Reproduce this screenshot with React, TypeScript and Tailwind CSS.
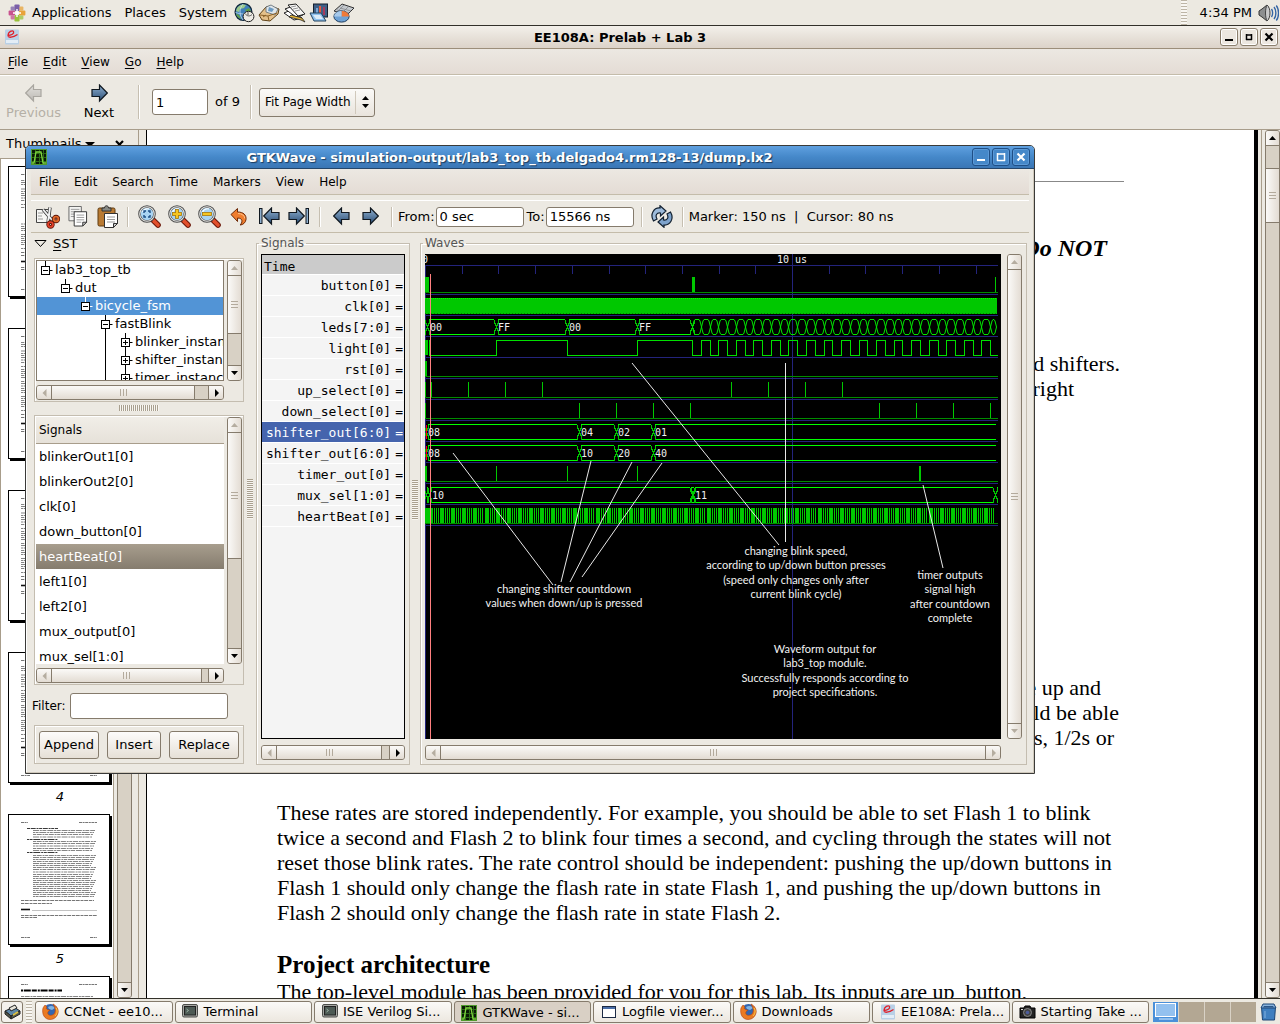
import React from "react";

const UI = "font-['DejaVu_Sans',sans-serif] text-[12px] leading-[16px] text-black";

/* ---------- small drawings ---------- */

function DistroLogo() {
  const petals = ["#7b5fa8", "#e8a33a", "#9ac23c", "#c8528f"];
  return (
    <svg width="18" height="18" viewBox="0 0 18 18" aria-hidden="true">
      {petals.map((c, i) => (
        <g key={c} transform={`rotate(${i * 90} 9 9)`}>
          <rect x="6.4" y="0.6" width="5.2" height="6.4" rx="1" fill={c} />
          <rect x="11.4" y="2.6" width="4" height="4" rx="1" fill={petals[(i + 1) % 4]} opacity="0.75" />
        </g>
      ))}
      <path d="M9 5v8M5 9h8" stroke="#fff" strokeWidth="1.4" />
    </svg>
  );
}

function GlobeIcon() {
  return (
    <svg width="21" height="20" viewBox="0 0 21 20" aria-hidden="true">
      <circle cx="9.5" cy="9" r="8.4" fill="#3f7fb8" stroke="#10263a" strokeWidth="1.3" />
      <path d="M3 5c3-4 7-4 9-3l-2 3-4 1-1 3-3-1z" fill="#9cc98a" />
      <path d="M2 11c3 0 4 2 5 5-2-1-4-2-5-5zM11 7l4-2 2 3-2 3z" fill="#5f9e48" />
      <path d="M1.5 9.5c5 2 11 2 16 0M9 1c-4 5-4 11 0 16" stroke="#cfe3f3" strokeWidth="0.7" fill="none" />
      <ellipse cx="14.5" cy="13.5" rx="5.4" ry="5.2" fill="#eceae4" stroke="#222" />
      <path d="M11 10.5c2 3 5 3 7 1M14 9v3" stroke="#555" fill="none" />
    </svg>
  );
}

function MailIcon() {
  return (
    <svg width="22" height="20" viewBox="0 0 22 20" aria-hidden="true">
      <path d="M1 12 8 4l4-1 9 3-1 5-8 7-8-1z" fill="#e4c08a" stroke="#5f4218" />
      <path d="m8 4 5-2 7 4-3 6-9-3z" fill="#dfe6ea" stroke="#5d6a73" strokeWidth="0.8" />
      <path d="m11 4 5 2-2 3-4-1z" fill="#6c9ac2" />
      <path d="m2 12 8 1 9-3M10 13l1 5M5 14l3-2" stroke="#8a6027" fill="none" />
    </svg>
  );
}

function WriterIcon() {
  return (
    <svg width="23" height="20" viewBox="0 0 23 20" aria-hidden="true">
      <path d="m1 10 7-3 11 8-8 2z" fill="#fff" stroke="#222" />
      <path d="m2 6 8-3 10 9-7 2z" fill="#fff" stroke="#222" />
      <path d="m5 2 8-1 9 10-7 2z" fill="#f8f8f6" stroke="#222" />
      <path d="m8 4 5-1M10 6l5-1M12 8l5-1" stroke="#999" />
      <path d="m6 14 12 3 4 2-3-4-11-3z" fill="#e9b83a" stroke="#222" strokeWidth="0.8" />
    </svg>
  );
}

function ImpressIcon() {
  return (
    <svg width="20" height="20" viewBox="0 0 20 20" aria-hidden="true">
      <rect x="4.5" y="1" width="14" height="13" fill="#3f5f85" stroke="#141f2d" />
      <path d="M8 11V5" stroke="#7aa7d8" strokeWidth="2" />
      <path d="M11 11V3" stroke="#e35b3c" strokeWidth="2" />
      <path d="M15 12V4" stroke="#a53a5c" strokeWidth="2" />
      <path d="m1 10 11 0 5 8H5z" fill="#8fc1ee" stroke="#23425f" />
      <path d="m4 12 7 0 3 4H7z" fill="#dcebf8" />
    </svg>
  );
}

function CalcIcon() {
  return (
    <svg width="23" height="20" viewBox="0 0 23 20" aria-hidden="true">
      <path d="m2 8 8-7 12 4-7 7z" fill="#c3c8cd" stroke="#333" />
      <path d="m5 7 12 3M8 5l11 3M12 2 6 8M16 4l-5 5" stroke="#7c8085" strokeWidth="0.7" />
      <ellipse cx="9.5" cy="13.5" rx="7.6" ry="5.600" fill="#6ea2d6" stroke="#1f3c5c" />
      <path d="M9.500 13.500V8c5 0 7.500 2.500 7.500 5.500z" fill="#ef7a3a" />
      <path d="M9.500 13.500H2c1-4 4-5.500 7.500-5.500z" fill="#a7c9ea" />
    </svg>
  );
}

function VolumeIcon() {
  return (
    <svg width="21" height="18" viewBox="0 0 21 18" aria-hidden="true">
      <path d="M1 7 4 5l5-4c3 3 3 13 0 16l-5-4-3-2z" fill="#8d8f90" stroke="#333" />
      <path d="M9 1c4 3 4 13 0 16-2-4-2-12 0-16z" fill="#c9cacb" stroke="#444" />
      <path d="M13.500 5c1.500 2 1.500 6 0 8M16 3c2.500 3 2.500 9 0 12M18.300 1.500c3 4 3 11 0 15" stroke="#3465a4" strokeWidth="1.400" fill="none" />
    </svg>
  );
}

function PdfIcon({ size = 16 }: { size?: number }) {
  return (
    <svg width={size} height={size} viewBox="0 0 16 16" aria-hidden="true">
      <rect x="1" y="0.500" width="14" height="15" rx="1" fill="#b9d0e6" />
      <path d="M2 11h12v3H2z" fill="#e3edf6" />
      <path d="M3.500 6.500c4 0 7-2 6-4C8.500.5 4 3 4 6.200c0 3.300 5 2.300 9.500-.7" fill="none" stroke="#e0202a" strokeWidth="1.300" />
    </svg>
  );
}

function WaveAppIcon() {
  return (
    <svg width="16" height="16" viewBox="0 0 16 16" aria-hidden="true">
      <rect width="16" height="16" fill="#0a1a06" />
      <path d="M0 4.500h16M0 8.500h16M0 12.500h16M4.500 0v16M8.500 0v16M12.500 0v16" stroke="#2c6b16" />
      <rect x="0.500" y="0.500" width="15" height="15" fill="none" stroke="#4f9a2c" />
      <path d="M1 14h2l2-11h5l2 11h3" fill="none" stroke="#7fd63f" strokeWidth="1.300" />
    </svg>
  );
}

function ArrowIcon({ dir, bar = false, off = false }: { dir: "left" | "right"; bar?: boolean; off?: boolean }) {
  const id = `arrow-${dir}-${bar}-${off}`;
  return (
    <svg width={bar ? 21 : 17} height="19" viewBox={bar ? "0 0 21 19" : "0 0 17 19"} aria-hidden="true">
      <defs>
        <linearGradient id={id} x1="0" y1="0" x2="0" y2="1">
          <stop offset="0" stopColor={off ? "#e2e0dc" : "#8fb0d0"} />
          <stop offset="1" stopColor={off ? "#bdbab5" : "#2c4f77"} />
        </linearGradient>
      </defs>
      <g transform={dir === "right" ? `translate(${bar ? 21 : 17} 0) scale(-1 1)` : undefined}>
        {bar && <rect x="0.500" y="1.500" width="2.500" height="15" fill="#8fb0d0" stroke="#101820" />}
        <g transform={bar ? "translate(4 0)" : undefined}>
          <path d="M0.700 9 8.500 1V5.500H16V12.500H8.500V17z" fill={`url(#${id})`} stroke={off ? "#a9a6a0" : "#101820"} strokeWidth="1.200" />
        </g>
      </g>
    </svg>
  );
}

function CutIcon() {
  return (
    <svg width="25" height="24" viewBox="0 0 25 24" aria-hidden="true">
      <path d="M1.500 4.500h14l-2 13h-12z" fill="#f7f7f5" stroke="#444" />
      <path d="M3 8h5M3 11h4M3 14h5" stroke="#999" />
      <path d="M8 4.500 17 15M15 2.500 13 18" stroke="#333" strokeWidth="3.400" />
      <path d="M8 4.500 17 15M15 2.500 13 17" stroke="#f1f2f3" strokeWidth="1.900" />
      <ellipse cx="21" cy="14" rx="2.400" ry="2.400" fill="none" stroke="#5a1408" strokeWidth="3.600" />
      <ellipse cx="21" cy="14" rx="2.400" ry="2.400" fill="none" stroke="#e06a2a" strokeWidth="1.900" />
      <ellipse cx="15.500" cy="19.500" rx="2.400" ry="2.400" fill="none" stroke="#5a1408" strokeWidth="3.600" />
      <ellipse cx="15.500" cy="19.500" rx="2.400" ry="2.400" fill="none" stroke="#e0402a" strokeWidth="1.900" />
    </svg>
  );
}

function CopyIcon() {
  return (
    <svg width="21" height="23" viewBox="0 0 21 23" aria-hidden="true">
      <path d="M1 1h13v15H1z" fill="#f4f4f2" stroke="#666" />
      <path d="M3 4h9M3 6.500h5M3 9h4M3 11.500h4" stroke="#999" />
      <path d="M6.500 6.500h13v11l-4 4h-9z" fill="#fff" stroke="#333" />
      <path d="M9 10h8M9 12.500h8M9 15h8M9 17.500h5" stroke="#999" />
      <path d="M19.500 17.500h-4v4z" fill="#ccc" stroke="#333" />
    </svg>
  );
}

function PasteIcon() {
  return (
    <svg width="22" height="23" viewBox="0 0 22 23" aria-hidden="true">
      <rect x="1" y="3" width="17" height="18" rx="1.500" fill="#b87a33" stroke="#5e3a10" />
      <path d="M5 6V3h2.500c0-3 4-3 4 0H14v3z" fill="#888a85" stroke="#333" />
      <path d="M7.500 8.500h13v10l-4 4h-9z" fill="#fff" stroke="#333" />
      <path d="M10 12h8M10 14.500h8M10 17h8" stroke="#999" />
      <path d="M20.500 18.500h-4v4z" fill="#ccc" stroke="#333" />
    </svg>
  );
}

function ZoomIcon({ kind }: { kind: "fit" | "in" | "out" }) {
  return (
    <svg width="23" height="23" viewBox="0 0 23 23" aria-hidden="true">
      <path d="m15 15 5 5" stroke="#6b1708" strokeWidth="5.600" strokeLinecap="round" />
      <path d="m16 16 4 4" stroke="#e2502c" strokeWidth="3.600" strokeLinecap="round" />
      <circle cx="9" cy="9" r="7.500" fill="#a9d4f2" stroke="#4c4c4c" strokeWidth="2.600" />
      <circle cx="9" cy="9" r="7.300" fill="none" stroke="#e6e6e3" strokeWidth="1.100" />
      <path d="M4.500 7C6 4 9 3.500 11 4" stroke="#fff" strokeWidth="1.200" fill="none" />
      {kind === "fit" && <path d="M6 8V6h2M10 6h2v2M12 10v2h-2M8 12H6v-2" stroke="#1c4f86" strokeWidth="1.400" fill="none" />}
      {kind !== "fit" && <rect x="4.500" y="7.500" width="9" height="3" fill="#f6c622" stroke="#a8780a" strokeWidth="0.800" />}
      {kind === "in" && (
        <>
          <rect x="7.500" y="4.500" width="3" height="9" fill="#f6c622" stroke="#a8780a" strokeWidth="0.800" />
          <rect x="5" y="8" width="8" height="2" fill="#f6c622" />
        </>
      )}
    </svg>
  );
}

function UndoIcon() {
  return (
    <svg width="18" height="19" viewBox="0 0 18 19" aria-hidden="true">
      <path d="M1 7.500 7.500 1.500V5c6 0 9 3 8.500 7.500-.3 3-3 5.500-6 5.500 2.500-2 3.500-7-2.500-7v3.500z" fill="#ef7d2e" stroke="#6e2a08" />
      <path d="M8 6.500c4 0 6.500 2 6.800 5" stroke="#ffc48c" fill="none" />
    </svg>
  );
}

function RefreshIcon() {
  const half = "M3.500 16C-.5 9 4 2.500 10 3V.7L16 6l-5.500 5V8C6.500 7.500 5 10.500 7 14z";
  return (
    <svg width="24" height="23" viewBox="0 0 24 23" aria-hidden="true">
      <path d={half} fill="#9dbbdb" stroke="#122030" strokeWidth="1.200" />
      <path d={half} fill="#7ea3cc" stroke="#122030" strokeWidth="1.200" transform="rotate(180 12 11.5)" />
    </svg>
  );
}

function FirefoxIcon() {
  return (
    <svg width="17" height="17" viewBox="0 0 17 17" aria-hidden="true">
      <circle cx="8.500" cy="8.500" r="7.500" fill="#3466b0" />
      <path d="M6 4c3-2 6-1 7 1l-3 2-3-1z" fill="#7fb4e4" />
      <path d="M1 5C2 3 3 2 3 2l2 2c-2 2 1 3 3 3-1 1-3 2-2 4s6 2 7-2c1-3-1-6-2-8 4 2 6 6 5 9-1 4-4 6.500-8 6.500C2.500 16.500-.5 11 1 5z" fill="#ea7a22" stroke="#b3420e" strokeWidth="0.600" />
      <path d="M14 5c2 3 1 6-1 8" stroke="#f9cf4a" fill="none" />
    </svg>
  );
}

function TerminalIcon() {
  return (
    <svg width="16" height="15" viewBox="0 0 16 15" aria-hidden="true">
      <rect x="0.500" y="0.500" width="15" height="12.500" rx="1.500" fill="#a7a8a4" stroke="#4c4d49" />
      <rect x="2.500" y="2.500" width="11" height="8.500" fill="#4d5a54" stroke="#222" />
      <path d="M4.500 5l2 1.500-2 1.500" stroke="#9db3a6" fill="none" />
    </svg>
  );
}

function WindowIcon() {
  return (
    <svg width="14" height="12" viewBox="0 0 14 12" aria-hidden="true">
      <rect x="0.500" y="0.500" width="13" height="11" fill="#fff" stroke="#1c2a44" />
      <path d="M1 2h12" stroke="#4a6ea8" strokeWidth="2" />
    </svg>
  );
}

function CameraIcon() {
  return (
    <svg width="17" height="14" viewBox="0 0 17 14" aria-hidden="true">
      <path d="M1 3h4l1-2h5l1 2h4v10H1z" fill="#222" stroke="#000" />
      <circle cx="8.500" cy="7.500" r="4" fill="#444" stroke="#888" />
      <circle cx="8.500" cy="7.500" r="1.800" fill="#4c5c9c" />
      <path d="M2 4.500h2" stroke="#ddd" />
    </svg>
  );
}

function DesktopIcon() {
  return (
    <svg width="17" height="16" viewBox="0 0 17 16" aria-hidden="true">
      <path d="m1 7 9-4 6 4-9 5z" fill="#5b86a8" stroke="#222" />
      <path d="m1 7 6 5v3L1 10zM7 12l9-5v3l-9 5z" fill="#55584a" stroke="#222" />
      <path d="m5 4 6-3 2 3-6 3z" fill="#e7e4da" stroke="#222" />
      <path d="m9 11 5-3" stroke="#e0c341" strokeWidth="1.600" />
    </svg>
  );
}

function TrashIcon() {
  return (
    <svg width="17" height="18" viewBox="0 0 17 18" aria-hidden="true">
      <path d="M1.500 4h14l-1 13h-12z" fill="#3f7fc0" stroke="#1d4676" />
      <path d="M3 1h11l2 4H1z" fill="#8ab4dd" stroke="#1d4676" />
      <path d="M4 3h9l1 1.500H3z" fill="#2a5688" />
      <path d="M5 8v7" stroke="#86b3e0" />
    </svg>
  );
}

function Triangle({ dir, off = false }: { dir: "up" | "down" | "left" | "right"; off?: boolean }) {
  const d = { up: "M0 6 3.500 2 7 6z", down: "M0 2 3.500 6 7 2z", left: "M5.500 0 1.500 4 5.500 8z", right: "M2 0 6 4 2 8z" }[dir];
  return (
    <svg width="7" height="8" viewBox="0 0 7 8" aria-hidden="true">
      <path d={d} fill={off ? "#b5ada0" : "#000"} />
    </svg>
  );
}

/* ---------- shared widgets ---------- */

function WindowButtons({ active = false }: { active?: boolean }) {
  const tone = active
    ? "border-[#1f4f86] bg-[#4588c9] text-white shadow-[inset_0_0_0_1px_#5c9ad8]"
    : "border-[#8a7e6c] bg-[#ece7e0] text-black shadow-[inset_0_0_0_1px_#fff]";
  return (
    <div className="flex gap-[2px]">
      {["Minimize", "Maximize", "Close"].map((name) => (
        <button key={name} aria-label={name} className={`flex size-[18px] items-center justify-center rounded-[3px] border ${tone}`}>
          <svg width="10" height="10" viewBox="0 0 10 10" fill="none" stroke="currentColor" strokeWidth="2" aria-hidden="true">
            {name === "Minimize" && <path d="M1 8h8" />}
            {name === "Maximize" && (active ? <path d="M1 2h8M1.500 1v8M8.500 1v8M1 8.500h8" strokeWidth="1.500" /> : <path d="M2 3h6M2.500 2v6M7.500 2v6M2 7.500h6" strokeWidth="1.500" />)}
            {name === "Close" && <path d="m1.500 1.500 7 7M8.500 1.500l-7 7" strokeWidth="2.200" />}
          </svg>
        </button>
      ))}
    </div>
  );
}

interface ScrollProps {
  vertical?: boolean;
  before?: string;
  after?: string;
  startOff?: boolean;
  endOff?: boolean;
  className?: string;
}

function Scroll({ vertical = false, before = "", after = "", startOff = false, endOff = false, className = "" }: ScrollProps) {
  const grad = vertical ? "bg-linear-to-r from-[#fbfaf8] to-[#e3dcd3]" : "bg-linear-to-b from-[#fbfaf8] to-[#e3dcd3]";
  const btn = vertical ? "h-[14px] w-full" : "h-full w-[14px]";
  const edge = vertical ? "border-y" : "border-x";
  return (
    <div className={`flex shrink-0 overflow-hidden rounded-[3px] border border-[#857b6c] bg-[#d8d1c5] ${vertical ? "w-[15px] flex-col" : "h-[15px]"} ${className}`}>
      <button aria-label="Scroll back" className={`flex shrink-0 items-center justify-center ${btn} ${grad}`}>
        <Triangle dir={vertical ? "up" : "left"} off={startOff} />
      </button>
      {before && <div className={`shrink-0 border-[#857b6c] ${vertical ? "border-t" : "border-l"} ${before}`} />}
      <div className={`flex flex-1 items-center justify-center gap-[2px] border-[#857b6c] ${vertical ? "flex-col" : ""} ${edge} ${grad}`}>
        {[0, 1, 2].map((i) => (
          <i key={i} className={`bg-[#b3aa9c] ${vertical ? "h-px w-[7px]" : "h-[7px] w-px"}`} />
        ))}
      </div>
      {after && <div className={`shrink-0 border-[#857b6c] ${vertical ? "border-b" : "border-r"} ${after}`} />}
      <button aria-label="Scroll forward" className={`flex shrink-0 items-center justify-center ${btn} ${grad}`}>
        <Triangle dir={vertical ? "down" : "right"} off={endOff} />
      </button>
    </div>
  );
}

function Separator({ className = "" }: { className?: string }) {
  return <div className={`w-[2px] shrink-0 border-l border-[#c6bfb1] bg-white ${className}`} />;
}

function GripV() {
  return <div className="h-[40px] w-[6px] self-center bg-[repeating-linear-gradient(#a9a08f_0_1px,#f8f6f2_1px_2px)]" />;
}

/* ---------- desktop panel ---------- */

function TopPanel() {
  return (
    <header className="flex h-[26px] shrink-0 items-center border-b border-[#33312a] bg-[#ece9e1] pr-[1px] pl-2 text-[13px]">
      <DistroLogo />
      <nav className="ml-[6px] flex gap-[13px]">
        <button>Applications</button>
        <button>Places</button>
        <button>System</button>
      </nav>
      <div className="ml-[7px] flex items-center gap-[3px]">
        <GlobeIcon />
        <MailIcon />
        <WriterIcon />
        <ImpressIcon />
        <CalcIcon />
      </div>
      <div className="ml-auto h-full w-[6px] bg-[repeating-linear-gradient(#bdb5a6_0_1px,#f8f6f2_1px_3px)]" />
      <span className="ml-[13px]">4:34 PM</span>
      <span className="ml-[6px]">
        <VolumeIcon />
      </span>
    </header>
  );
}

const tasks: [React.ReactNode, string][] = [
  [<FirefoxIcon />, "CCNet - ee10..."],
  [<TerminalIcon />, "Terminal"],
  [<TerminalIcon />, "ISE Verilog Si..."],
  [<WaveAppIcon />, "GTKWave - si..."],
  [<WindowIcon />, "Logfile viewer..."],
  [<FirefoxIcon />, "Downloads"],
  [<PdfIcon />, "EE108A: Prela..."],
  [<CameraIcon />, "Starting Take ..."],
];

function TaskBar() {
  return (
    <footer className="flex h-[26px] shrink-0 items-center border-t border-[#33312a] bg-[#ece9e1] px-[1px]">
      <button aria-label="Show desktop" className="flex h-[22px] w-[22px] items-center justify-center rounded-[3px] border border-[#857b6c] bg-[#f4f1ec]">
        <DesktopIcon />
      </button>
      <div className="mx-[3px] h-[22px] w-[6px] bg-[repeating-linear-gradient(#bdb5a6_0_1px,#f8f6f2_1px_3px)]" />
      <div className="flex min-w-0 flex-1 gap-[2px]">
        {tasks.map(([icon, label]) => (
          <button
            key={label}
            className={`flex h-[22px] min-w-0 flex-1 items-center gap-[5px] rounded-[3px] border border-[#857b6c] px-[6px] text-[13px] whitespace-nowrap ${
              label.startsWith("GTKWave") ? "bg-[#d9d0c5] pt-[2px]" : "bg-linear-to-b from-[#fbfaf8] to-[#ece7df]"
            }`}
          >
            <span className="flex w-[17px] shrink-0 justify-center">{icon}</span>
            <span>{label}</span>
          </button>
        ))}
      </div>
      <div className="ml-[4px] flex h-[20px] gap-px bg-[#d9d2c6]">
        <div className="flex w-[25px] flex-col items-center bg-[#4a90d9] pt-[1px]">
          <div className="h-[14px] w-[21px] border border-white bg-[#93c1ef]" />
          <div className="mt-[1px] h-[2px] w-[14px] bg-[#93c1ef]" />
        </div>
        <div className="w-[25px] bg-[#b3a793]" />
        <div className="w-[25px] bg-[#b3a793]" />
        <div className="w-[25px] bg-[#b3a793]" />
      </div>
      <div className="mr-[2px] ml-[4px]">
        <TrashIcon />
      </div>
    </footer>
  );
}

/* ---------- document viewer ---------- */

const bodyLines = [14, 16, 18, 20, 22.5, 25, 27, 29, 31.5, 34, 36, 38, 41, 43, 45, 47, 49, 51, 53, 55, 57.5, 60, 62, 64, 66, 68, 70, 72, 74, 76, 78, 80, 82];

function Thumbnail({ page }: { page: number }) {
  const dense = page !== 1;
  return (
    <button className="flex h-[162px] w-[104px] shrink-0 flex-col items-center">
      <svg width="104" height="133" viewBox="0 0 104 133" aria-hidden="true">
        <path d="M2 2h102v131H2z" fill="#000" />
        <rect x="0.500" y="0.500" width="101" height="130" fill="#fff" stroke="#000" />
        <g stroke="#666" strokeWidth="0.900" fill="none">
          <path d="M13 8.500h7M71 8.500h18M13 123.500h9M82 123.500h7" strokeDasharray="3 .6 2 .6" />
          {page === 6 && <path d="M13 14.500h41" stroke="#000" strokeWidth="2" strokeDasharray="2 .8 7 1 5 1" />}
          {bodyLines.map((y, i) => {
            const head = page === 5 && (y === 14 || y === 25 || y === 38);
            const x = page === 5 ? (head ? 19 : 25) : page === 6 ? 13 : 13 + (i % 7 === 3 ? 4 : 0);
            if (page === 6 && y < 20) return null;
            if (!dense && i > 12 && i < 20) return null;
            return (
              <path
                key={y}
                d={`M${x} ${y + 0.5}H${head ? 50 : 88 - ((i * 7) % 6)}`}
                stroke={head ? "#222" : "#777"}
                strokeDasharray={["3 .7 5 .8 2 .6", "6 .8 2 .6 4 .9", "2 .6 3 .7 7 .9"][i % 3]}
              />
            );
          })}
          <path d="M13 86.500h73M13 89.500h31M13 101.500h76M13 103.500h16" strokeDasharray="3 .7 4 .8" />
          <path d="M13 95.500h9" stroke="#111" strokeWidth="1.600" />
          <path d="M24 96.500h65" stroke="#bbb" />
        </g>
      </svg>
      <span className="mt-[4px] text-[13px] italic">{page}</span>
    </button>
  );
}

function ViewerChrome() {
  return (
    <>
      <div className="flex h-[23px] shrink-0 items-center border-b border-[#9c8e7a] bg-linear-to-b from-[#f3f0ea] to-[#dcd3c9] pr-[2px] pl-[4px]">
        <PdfIcon />
        <h1 className="flex-1 pt-[2px] text-center text-[13px] font-bold">EE108A: Prelab + Lab 3</h1>
        <WindowButtons />
      </div>
      <nav className="flex h-[26px] shrink-0 items-center gap-[15px] border-b border-[#c4bcaa] bg-linear-to-b from-[#ece8e2] to-[#e4dcd5] px-2">
        {["File", "Edit", "View", "Go", "Help"].map((m) => (
          <button key={m}>
            <u className="underline-offset-2">{m[0]}</u>
            {m.slice(1)}
          </button>
        ))}
      </nav>
      <div className="flex h-[55px] shrink-0 items-center border-b border-[#a89d8b] bg-[#ece9e2] text-[13px] shadow-[inset_0_1px_0_#fff]">
        <button disabled className="flex w-[67px] flex-col items-center gap-[2px] text-[#b5b0a6]">
          <ArrowIcon dir="left" off />
          Previous
        </button>
        <button className="flex w-[64px] flex-col items-center gap-[2px]">
          <ArrowIcon dir="right" />
          Next
        </button>
        <Separator className="ml-[7px] h-[34px]" />
        <input aria-label="Page" defaultValue="1" className="ml-3 h-[26px] w-[56px] rounded-[3px] border border-[#857b6c] bg-white px-[3px]" />
        <span className="ml-[7px]">of 9</span>
        <Separator className="ml-[10px] h-[34px]" />
        <div className="relative ml-[7px]">
          <select
            aria-label="Zoom"
            className="h-[29px] w-[116px] appearance-none rounded-[3px] border border-[#857b6c] bg-linear-to-b from-[#fbfaf8] to-[#e9e4dc] pl-[5px] text-[12px]"
          >
            <option>Fit Page Width</option>
          </select>
          <div className="pointer-events-none absolute inset-y-[3px] right-[6px] flex flex-col items-center justify-center border-l border-[#d0c8bb] pl-[6px]">
            <Triangle dir="up" />
            <Triangle dir="down" />
          </div>
        </div>
      </div>
    </>
  );
}

function SidePane() {
  return (
    <aside className="flex w-[139px] shrink-0 flex-col border-r border-[#a89d8b]">
      <div className="flex h-[28px] shrink-0 items-center pl-[6px] text-[13px]">
        Thumbnails
        <span className="ml-[3px] border-x-[5px] border-t-[5px] border-x-transparent border-t-black" />
        <button aria-label="Close pane" className="ml-[20px]">
          <svg width="9" height="9" viewBox="0 0 9 9" stroke="#000" strokeWidth="2.200" aria-hidden="true">
            <path d="m1 1 7 7M8 1 1 8" />
          </svg>
        </button>
      </div>
      <div className="flex min-h-0 flex-1 border-t border-l border-[#a89d8b]">
        <div className="flex min-w-0 flex-1 flex-col items-start overflow-hidden border-r border-[#a89d8b] bg-white pt-[7px] pl-[7px]">
          {[1, 2, 3, 4, 5, 6].map((p) => (
            <Thumbnail key={p} page={p} />
          ))}
        </div>
        <Scroll vertical before="h-[300px]" after="h-[400px]" className="mr-[6px] ml-[3px]" />
      </div>
    </aside>
  );
}

function Page() {
  return (
    <main className="ml-[7px] min-w-0 flex-1 overflow-hidden border-r-4 border-l border-black bg-white pl-[130px] font-['Liberation_Serif',serif] text-[22px] leading-[25px]">
      <div className="w-[847px]">
        <hr className="mt-[51px] border-[#888]" />
        <p className="mt-[54px] pr-[17px] text-right text-[24px] font-bold italic">Do NOT</p>
        <p className="mt-[90px] pr-1 text-right">and shifters.</p>
        <p className="pr-[50px] text-right">right</p>
        <p className="mt-[274px] pr-[23px] text-right">are up and</p>
        <p className="pr-[5px] text-right">should be able</p>
        <p className="pr-[10px] text-right">s, 1/2s or</p>
        <p className="mt-[50px] whitespace-nowrap">
          These rates are stored independently. For example, you should be able to set Flash 1 to blink
          <br />
          twice a second and Flash 2 to blink four times a second, and cycling through the states will not
          <br />
          reset those blink rates. The rate control should be independent: pushing the up/down buttons in
          <br />
          Flash 1 should only change the flash rate in state Flash 1, and pushing the up/down buttons in
          <br />
          Flash 2 should only change the flash rate in state Flash 2.
        </p>
        <h2 className="mt-[27px] text-[25px] font-bold">Project architecture</h2>
        <p className="mt-[2px] whitespace-nowrap">The top-level module has been provided for you for this lab. Its inputs are up_button,</p>
      </div>
    </main>
  );
}

/* ---------- GTKWave ---------- */

function IconButton({ label, className = "", children }: { label: string; className?: string; children: React.ReactNode }) {
  return (
    <button aria-label={label} className={`flex shrink-0 items-center justify-center ${className}`}>
      {children}
    </button>
  );
}

function WaveToolbar() {
  const field = "h-[20px] w-[88px] rounded-[3px] border border-[#857b6c] bg-white px-[3px]";
  return (
    <div className="mt-[5px] flex h-[33px] shrink-0 items-center border-t border-b border-t-white border-b-[#c4bcaa] text-[13px] whitespace-nowrap">
      <div className="flex items-center gap-[8px] pl-[4px]">
        <IconButton label="Cut" className="w-[25px]"><CutIcon /></IconButton>
        <IconButton label="Copy" className="w-[20px]"><CopyIcon /></IconButton>
        <IconButton label="Paste" className="w-[23px]"><PasteIcon /></IconButton>
      </div>
      <Separator className="ml-[8px] h-[20px]" />
      <div className="ml-[9px] flex items-center gap-[7px]">
        <IconButton label="Zoom fit"><ZoomIcon kind="fit" /></IconButton>
        <IconButton label="Zoom in"><ZoomIcon kind="in" /></IconButton>
        <IconButton label="Zoom out"><ZoomIcon kind="out" /></IconButton>
      </div>
      <IconButton label="Zoom undo" className="ml-[9px]"><UndoIcon /></IconButton>
      <IconButton label="Zoom to start" className="ml-[11px]"><ArrowIcon dir="left" bar /></IconButton>
      <IconButton label="Zoom to end" className="ml-[8px]"><ArrowIcon dir="right" bar /></IconButton>
      <Separator className="ml-[10px] h-[20px]" />
      <IconButton label="Previous edge" className="ml-[12px]"><ArrowIcon dir="left" /></IconButton>
      <IconButton label="Next edge" className="ml-[12px]"><ArrowIcon dir="right" /></IconButton>
      <Separator className="ml-[12px] h-[20px]" />
      <label className="ml-[5px] flex items-center gap-[1px]">
        From:
        <input defaultValue="0 sec" className={field} />
      </label>
      <label className="ml-[3px] flex items-center gap-[1px]">
        To:
        <input defaultValue="15566 ns" className={field} />
      </label>
      <Separator className="ml-[7px] h-[20px]" />
      <IconButton label="Reload" className="ml-[7px]"><RefreshIcon /></IconButton>
      <Separator className="ml-[8px] h-[20px]" />
      <span className="ml-[5px] whitespace-pre">{"Marker: 150 ns  |  Cursor: 80 ns"}</span>
    </div>
  );
}

const tree: [string, number, boolean][] = [
  ["lab3_top_tb", 0, true],
  ["dut", 1, true],
  ["bicycle_fsm", 2, true],
  ["fastBlink", 3, true],
  ["blinker_instance", 4, false],
  ["shifter_instance", 4, false],
  ["timer_instance", 4, false],
];

function TreeRow({ name, depth, open }: { name: string; depth: number; open: boolean }) {
  const c = 8.5 + depth * 20;
  const selected = name === "bicycle_fsm";
  return (
    <li className={`flex h-[18px] items-center whitespace-nowrap ${selected ? "bg-[#5294d6] text-white" : ""}`}>
      <svg width={18 + depth * 20} height="18" className="shrink-0" stroke="#000" fill="none" aria-hidden="true">
        <path d={`M${c} 0V5M${c + 4} 9.500h3`} stroke={selected ? "#fff" : "#000"} />
        {depth >= 3 && <path d={`M${depth === 3 ? c : c - 20} ${depth === 3 ? 14 : 0}V18`} />}
        {depth === 4 && <path d={`M${c} 14V18`} />}
        <rect x={c - 4} y="5.500" width="8" height="8" fill="#fff" />
        <path d={`M${c - 2.5} 9.500h5`} />
        {!open && <path d={`M${c} 7v5`} />}
      </svg>
      {name}
    </li>
  );
}

const signalList = ["blinkerOut1[0]", "blinkerOut2[0]", "clk[0]", "down_button[0]", "heartBeat[0]", "left1[0]", "left2[0]", "mux_output[0]", "mux_sel[1:0]"];

function LeftColumn() {
  const frame = "border border-[#c4bdb0] shadow-[inset_1px_1px_0_#fff]";
  const push = "h-[28px] rounded-[3px] border border-[#857b6c] bg-linear-to-b from-[#fdfcfb] to-[#e6e0d7]";
  return (
    <section className="flex w-[213px] shrink-0 flex-col pl-[3px] text-[13px]">
      <div className="flex h-[25px] shrink-0 items-center pb-1">
        <svg width="13" height="8" viewBox="0 0 13 8" fill="none" stroke="#000" aria-hidden="true">
          <path d="M1 0.500h11L6.500 6.500z" />
        </svg>
        <span className="ml-[6px]"><u className="underline-offset-2">S</u>ST</span>
      </div>
      <div className={`flex h-[144px] shrink-0 flex-col gap-[4px] p-px ${frame}`}>
        <div className="flex min-h-0 flex-1 gap-[3px]">
          <ul className="min-w-0 flex-1 overflow-hidden border border-[#857b6c] bg-white">
            {tree.map(([n, d, o]) => (
              <TreeRow key={n} name={n} depth={d} open={o} />
            ))}
          </ul>
          <Scroll vertical startOff after="h-[32px]" />
        </div>
        <Scroll startOff after="w-[14px]" className="mr-[18px]" />
      </div>
      <div className="mt-[3px] mb-[4px] h-[6px] w-[40px] shrink-0 self-center bg-[repeating-linear-gradient(90deg,#a9a08f_0_1px,#f8f6f2_1px_2px)]" />
      <div className={`flex h-[270px] shrink-0 flex-col gap-[4px] p-px ${frame}`}>
        <div className="flex min-h-0 flex-1 gap-[3px]">
          <div className="min-w-0 flex-1 overflow-hidden bg-white">
            <div className="flex h-[27px] items-center border-b border-[#a89d8b] bg-linear-to-b from-[#f1eee8] to-[#e6e1d9] pl-[3px] text-[12px]">Signals</div>
            <ul>
              {signalList.map((s) => (
                <li key={s} className={`flex h-[25px] items-center pl-[3px] ${s.startsWith("heart") ? "bg-linear-to-b from-[#a89e8e] to-[#857c6e] text-white" : ""}`}>
                  {s}
                </li>
              ))}
            </ul>
          </div>
          <Scroll vertical startOff after="h-[90px]" />
        </div>
        <Scroll startOff after="w-[7px]" className="mr-[18px]" />
      </div>
      <label className="-ml-[2px] mt-[8px] flex h-[26px] shrink-0 items-center">
        <span className="w-[38px] text-[12px]">Filter:</span>
        <input className="h-[26px] w-[158px] rounded-[3px] border border-[#857b6c] bg-white px-1" />
      </label>
      <div className={`mt-[6px] flex h-[39px] shrink-0 items-center justify-between px-[4px] ${frame}`}>
        <button className={`w-[60px] ${push}`}>Append</button>
        <button className={`w-[54px] ${push}`}>Insert</button>
        <button className={`w-[70px] ${push}`}>Replace</button>
      </div>
    </section>
  );
}

const traces = [
  "button[0]", "clk[0]", "leds[7:0]", "light[0]", "rst[0]", "up_select[0]", "down_select[0]",
  "shifter_out[6:0]", "shifter_out[6:0]", "timer_out[0]", "mux_sel[1:0]", "heartBeat[0]",
];

function GroupBox({ title, className = "", children }: { title: string; className?: string; children: React.ReactNode }) {
  return (
    <fieldset className={`flex min-w-0 flex-col border border-[#c4bdb0] shadow-[inset_1px_1px_0_#fff] ${className}`}>
      <legend className="ml-[2px] h-[16px] px-[2px] text-[#555]">{title}</legend>
      {children}
    </fieldset>
  );
}

function SignalNames() {
  return (
    <GroupBox title="Signals" className="w-[154px] shrink-0">
      <div className="flex h-full flex-col px-[4px] pb-[4px]">
        <div className="mt-[3px] min-h-0 flex-1 border border-black bg-[#f4f4f4] font-['DejaVu_Sans_Mono',monospace] text-[13px]">
          <div className="h-[19px] bg-[#cbcbcb] pt-[4px] pl-[2px] leading-[16px]">Time</div>
          <ul className="border-t border-white">
            {traces.map((t, i) => (
              <li key={i} className={`flex h-[21px] items-center justify-end border-b border-white pt-[2px] pr-px ${i === 7 ? "bg-[#4564ad] text-white" : ""}`}>
                <span>{t}</span>
                <span className="ml-[4px]">=</span>
              </li>
            ))}
          </ul>
        </div>
        <Scroll startOff after="w-[8px]" className="mt-[6px]" />
      </div>
    </GroupBox>
  );
}

const G = "#00c800";
const DARK = "#008c00";
const BRIGHT = "#00ff00";
const BLUE = "#23237c";

function Pulses({ row, at, w = 1 }: { row: number; at: number[]; w?: number }) {
  return (
    <>
      {at.map((x) => (
        <rect key={x} x={x} y={23 + 21 * row} width={w} height="15" fill={G} />
      ))}
    </>
  );
}

function Bus({ row, cuts, end = 571 }: { row: number; cuts: number[]; end?: number }) {
  const t = 23.5 + 21 * row;
  const b = t + 15;
  const stops = [...cuts, end];
  return (
    <g fill="none" stroke={BRIGHT}>
      {cuts.map((x, i) => {
        const to = stops[i + 1] - (i === cuts.length - 1 ? 0 : 2);
        return (
          <g key={x}>
            <path d={`M${x + 2} ${t}H${to}M${x + 2} ${b}H${to}`} />
            <path d={`M${x - 1.5} ${t}v3l2 4v1l-2 4v3M${x + 2.5} ${t}v3l-2 4v1l2 4v3`} stroke={G} />
          </g>
        );
      })}
    </g>
  );
}

function Note({ x, y, lines }: { x: number; y: number; lines: string[] }) {
  return (
    <text textAnchor="middle" fill="#f2f2f2" className="font-['Lato',sans-serif] text-[11px]">
      {lines.map((l, i) => (
        <tspan key={l} x={x} y={y + Math.round(i * 14.4)}>
          {l}
        </tspan>
      ))}
    </text>
  );
}

function WaveCanvas() {
  const toggles = Array.from({ length: 35 }, (_, k) => Math.round(267 + k * 8.77));
  const lightTail = toggles.map((x, k) => `H${x + 0.5}V${k % 2 ? 86.5 : 101.5}`).join("");
  const labels: [number, number, string][] = [
    [5, 2, "00"], [73, 2, "FF"], [144, 2, "00"], [214, 2, "FF"],
    [3, 7, "08"], [156, 7, "04"], [193, 7, "02"], [230, 7, "01"],
    [3, 8, "08"], [156, 8, "10"], [193, 8, "20"], [230, 8, "40"],
    [7, 10, "10"], [270, 10, "11"],
  ];
  return (
    <svg width="576" height="485" viewBox="0 0 576 485" shapeRendering="crispEdges" role="img" aria-label="Waveforms" className="block">
      <rect width="576" height="485" fill="#000" />
      <g stroke={BLUE} fill="none">
        <path d="M0 11.500H573M0.500 11V485M367.500 0V485" />
        {Array.from({ length: 16 }, (_, i) => (
          <path key={i} d={`M${Math.round(i * 36.7) + 0.5} 11V20`} />
        ))}
        {traces.map((_, i) => (
          <path key={i} d={`M0 ${40.5 + 21 * i}H573`} />
        ))}
      </g>
      <g stroke={DARK}>
        {[0, 4, 5, 6, 9, 11].map((r) => (
          <path key={r} d={`M0 ${38.5 + 21 * r}H573`} />
        ))}
      </g>
      <Pulses row={0} at={[0]} w={4} />
      <Pulses row={0} at={[267]} w={3} />
      <Pulses row={0} at={[570]} />
      <rect x="0" y="44" width="572" height="16" fill={G} />
      <path d="M0 44.500H572" stroke={BRIGHT} strokeDasharray="1 1" />
      <path d="M0 59.500H572" stroke={DARK} strokeDasharray="1 2" />
      <Bus row={2} cuts={[2, 71, 142, 212, 267]} end={269} />
      <g shapeRendering="auto">
        {toggles.map((x, i) => {
          const n = toggles[i + 1] ?? 571;
          return (
            <path
              key={x}
              d={`M${x + 0.5} 73 ${x + 2} 67 ${x + 3} 65.500H${n - 2}L${n - 1} 67 ${n + 0.5} 73M${x + 0.5} 73 ${x + 2} 79 ${x + 3} 80.500H${n - 2}L${n - 1} 79 ${n + 0.5} 73`}
              stroke="#00e800"
              fill="none"
            />
          );
        })}
      </g>
      <rect x="0" y="86" width="3" height="15" fill={G} />
      <path d={`M4.500 86V101.500H71.500V86.500H142.500V101.500H212.500V86.500${lightTail}H573`} stroke="#00e000" fill="none" />
      <Pulses row={4} at={[0]} w={2} />
      <Pulses row={5} at={[0, 6, 43, 80, 117, 306, 343, 380, 417]} />
      <Pulses row={6} at={[0, 154, 191, 228, 265, 454, 491, 528, 565]} />
      <Bus row={7} cuts={[1, 154, 191, 228]} />
      <Bus row={8} cuts={[1, 154, 191, 228]} />
      <path d="M1.500 171V185M1.500 192V206" stroke="#ff0000" />
      <Pulses row={9} at={[0, 1, 71, 142, 212]} />
      <Pulses row={9} at={[494]} w={2} />
      <Bus row={10} cuts={[1, 4, 267, 268, 570]} end={573} />
      <rect x="0" y="254" width="5" height="15" fill={G} />
      {Array.from({ length: 51 }, (_, k) => {
        const x = Math.round(4 + k * 11.1);
        return <path key={k} d={`M${x} 261.500h4m1 0h1m1 0h1m1 0h1`} stroke={G} strokeWidth="15" />;
      })}
      <path d="M5.500 20V485" stroke="#ff8080" />
      <g fill="#f0f0f0" className="font-['DejaVu_Sans_Mono',monospace] text-[10px]">
        <text x="-3" y="9">0</text>
        <text x="352" y="9">10 us</text>
        {labels.map(([x, r, t], i) => (
          <text key={i} x={x} y={35 + 21 * r}>{t}</text>
        ))}
      </g>
      <path
        shapeRendering="auto"
        stroke="#e8e8e8"
        fill="none"
        d="M28 199 128 331M166 207 136 328M207 208 145 328M237 209 157 323M207 109 354 291M360.500 109V288M498 231 518 314"
      />
      <Note x={139} y={339} lines={["changing shifter countdown", "values when down/up is pressed"]} />
      <Note x={371} y={301} lines={["changing blink speed,", "according to up/down button presses", "(speed only changes only after", "current blink cycle)"]} />
      <Note x={525} y={325} lines={["timer outputs", "signal high", "after countdown", "complete"]} />
      <Note x={400} y={399} lines={["Waveform output for", "lab3_top module.", "Successfully responds according to", "project specifications."]} />
    </svg>
  );
}

function Waves() {
  return (
    <GroupBox title="Waves" className="flex-1">
      <div className="flex h-full flex-col pr-[4px] pb-[4px] pl-[4px]">
        <div className="mt-[3px] flex min-h-0 flex-1 gap-[6px]">
          <div className="min-w-0 flex-1 overflow-hidden bg-black">
            <WaveCanvas />
          </div>
          <Scroll vertical startOff endOff />
        </div>
        <Scroll startOff endOff className="mt-[6px] mr-[21px]" />
      </div>
    </GroupBox>
  );
}

function WaveWindow() {
  return (
    <div className="absolute top-[145px] left-[25px] flex h-[629px] w-[1010px] flex-col rounded-t-[5px] border border-[#3a3a38] bg-[#ece9e2] shadow-[inset_-1px_-1px_0_#cfc8bb,inset_1px_0_0_#fff]">
      <div className="flex h-[23px] shrink-0 items-center rounded-t-[4px] border-b border-[#24466b] bg-linear-to-b from-[#5fa0e0] via-[#4588c9] to-[#3a76b5] pr-[4px] pl-[5px]">
        <WaveAppIcon />
        <h2 className="flex-1 pt-[2px] text-center text-[13px] font-bold whitespace-nowrap text-white [text-shadow:1px_1px_1px_#1c3a5c]">
          GTKWave - simulation-output/lab3_top_tb.delgado4.rm128-13/dump.lx2
        </h2>
        <WindowButtons active />
      </div>
      <div className="flex min-h-0 flex-1 flex-col px-[5px] pb-[8px]">
        <nav className="flex h-[26px] shrink-0 items-center gap-[15px] border-b border-[#c4bcaa] bg-linear-to-b from-[#ece8e2] to-[#e4dcd5] px-2 pt-px">
          {["File", "Edit", "Search", "Time", "Markers", "View", "Help"].map((m) => (
            <button key={m}>{m}</button>
          ))}
        </nav>
        <WaveToolbar />
        <div className="flex min-h-0 flex-1 pr-[2px]">
          <LeftColumn />
          <div className="flex w-[12px] shrink-0 justify-center"><GripV /></div>
          <div className="flex min-w-0 flex-1 pt-[2px]">
            <SignalNames />
            <div className="flex w-[10px] shrink-0 justify-center"><GripV /></div>
            <Waves />
          </div>
        </div>
      </div>
    </div>
  );
}

export default function App() {
  return (
    <div className={`relative flex h-screen flex-col overflow-hidden bg-[#ece9e2] ${UI}`}>
      <TopPanel />
      <ViewerChrome />
      <div className="flex min-h-0 flex-1">
        <SidePane />
        <Page />
        <div className="flex shrink-0 border-r border-[#a89d8b] pl-[3px]" />
        <Scroll vertical before="h-[23px]" after="h-[760px]" className="ml-[3px]" />
      </div>
      <TaskBar />
      <WaveWindow />
    </div>
  );
}
